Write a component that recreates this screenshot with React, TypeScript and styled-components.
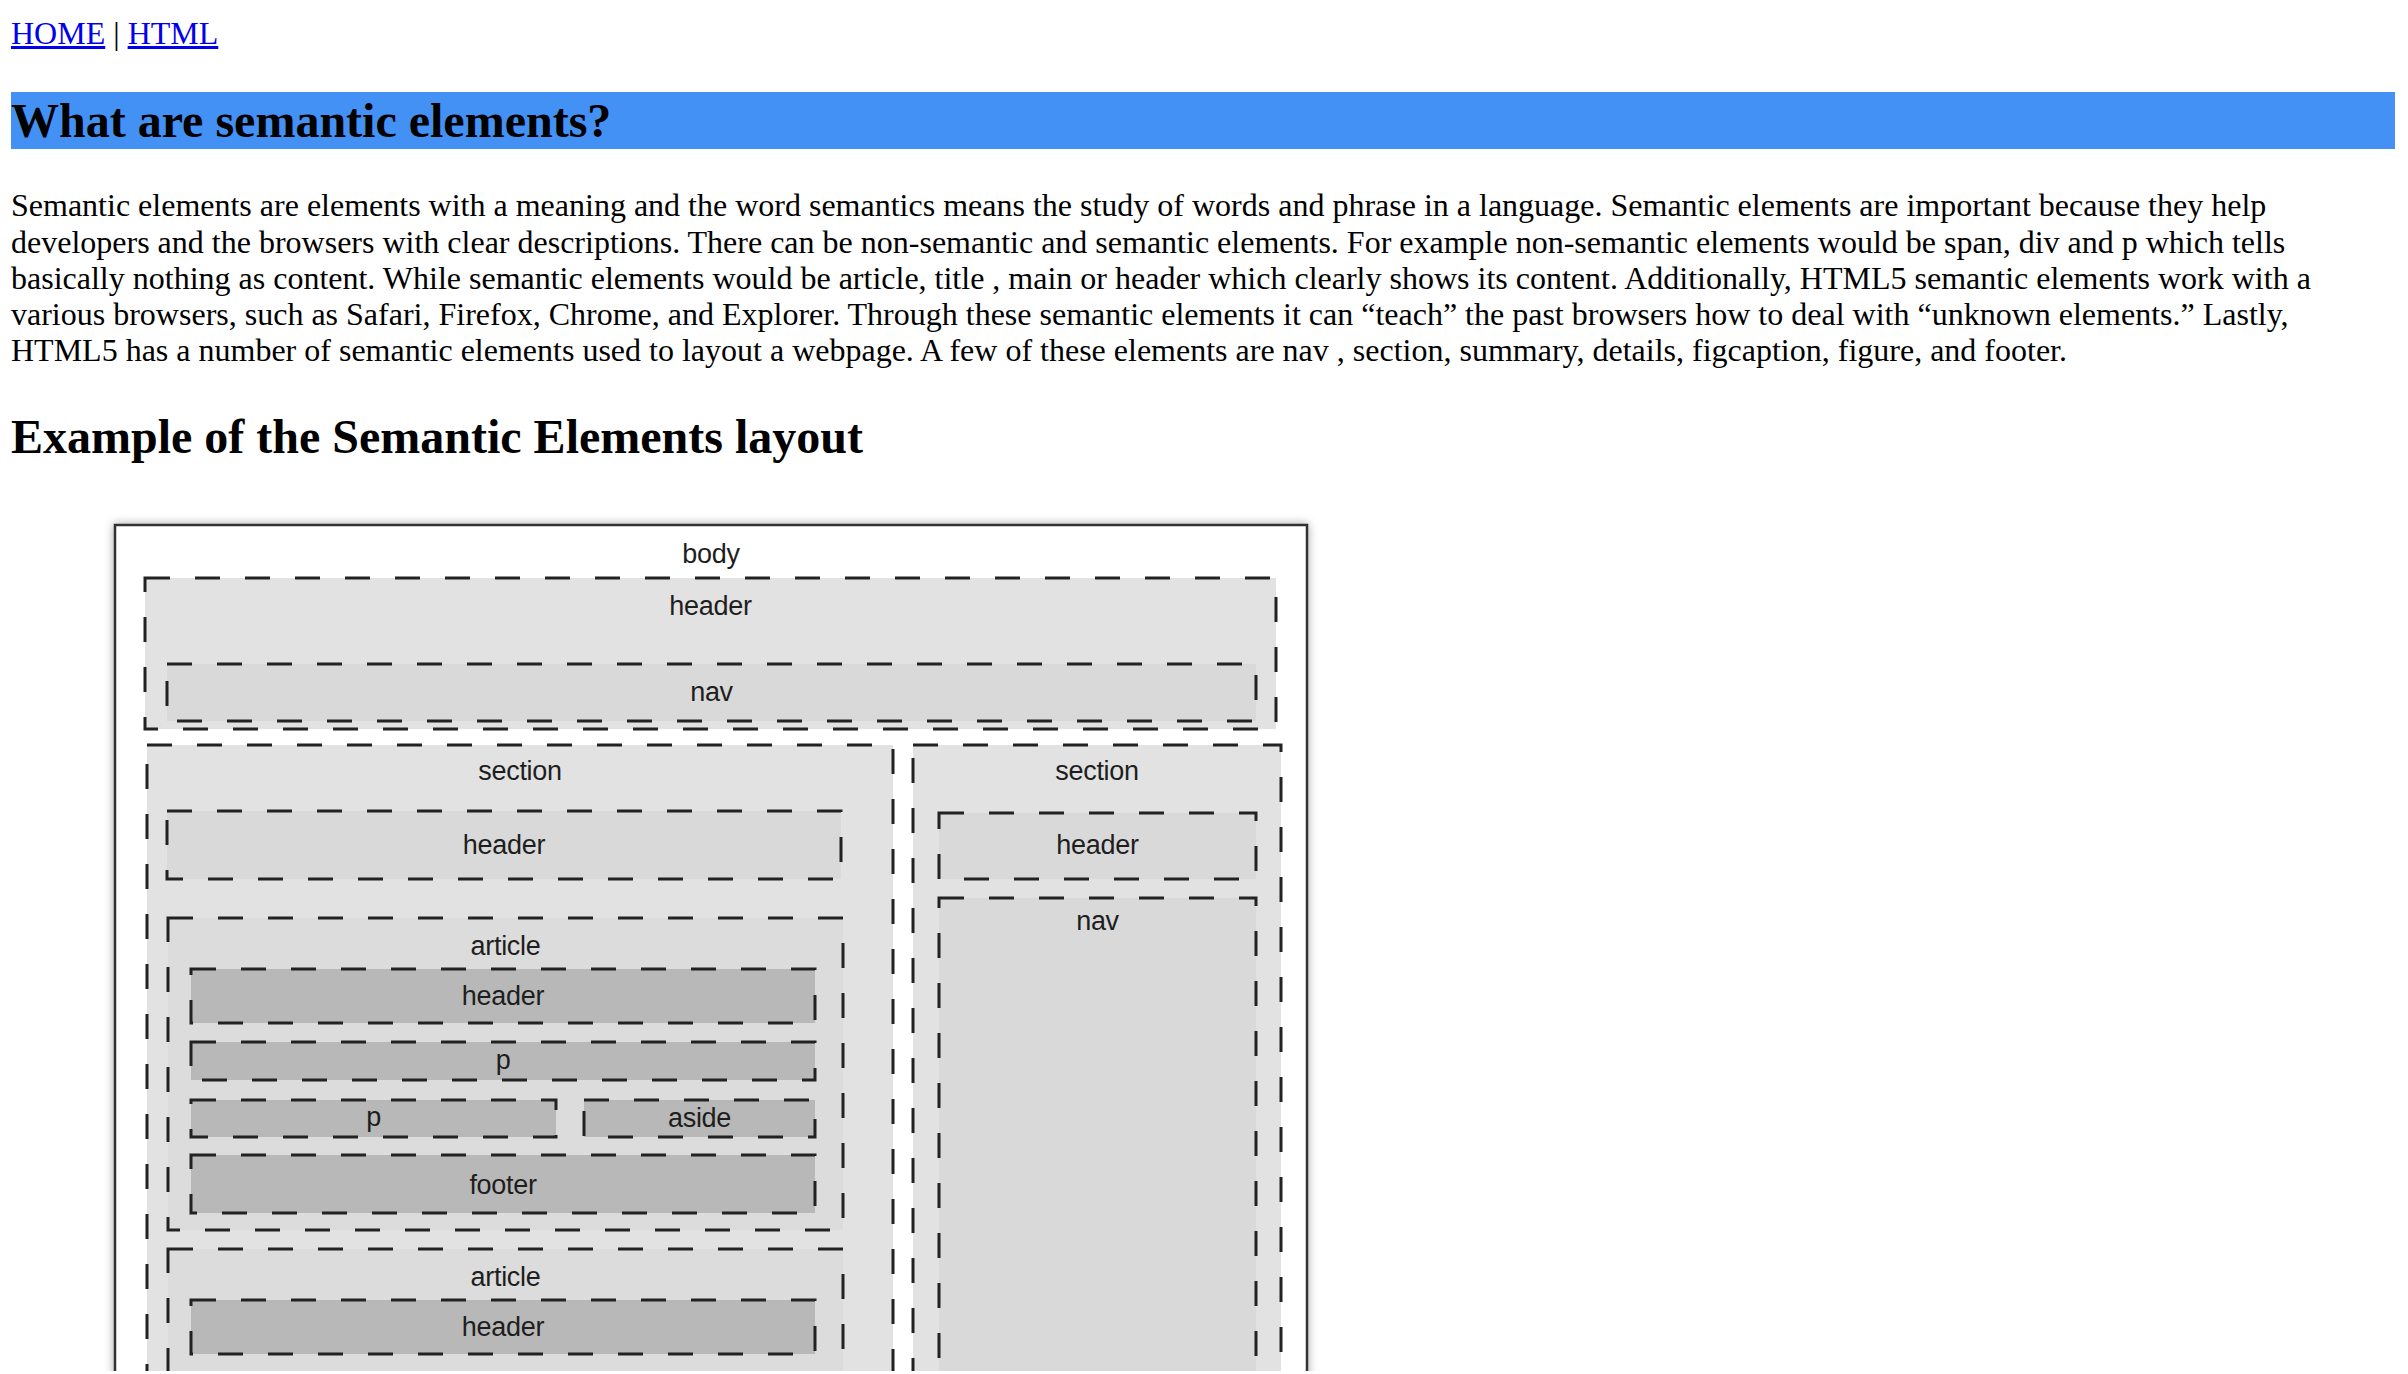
import React from 'react';
import styled, { createGlobalStyle } from 'styled-components';

const GlobalStyle = createGlobalStyle`
  html, body {
    margin: 0;
    padding: 0;
    background: #ffffff;
  }
  body {
    font-family: "Liberation Serif", "Times New Roman", serif;
    color: #000000;
  }
`;

const Page = styled.div`
  padding: 15px 13px 0 11px;
  font-size: 32px;
  line-height: 36.3px;
`;

const TopNav = styled.nav`
  margin: 0;
`;

const NavLink = styled.a`
  color: #0000ee;
  text-decoration: underline;
`;

const Title = styled.h1`
  margin: 41px 0 0;
  background: #4391f5;
  font-size: 48px;
  line-height: 57px;
  font-weight: bold;
`;

const Intro = styled.p`
  margin: 38px 0 0;
`;

const SubTitle = styled.h2`
  margin: 40px 0 0;
  font-size: 48px;
  line-height: 55px;
  font-weight: bold;
`;

const Diagram = styled.svg`
  display: block;
  margin: 47px 0 0 89px;
  width: 1220px;
  height: 860px;
`;

const Frame = styled.rect`
  fill: #ffffff;
  stroke: #333333;
  stroke-width: 2.5;
`;

const Region = styled.rect<{ $tone: string }>`
  fill: ${p => p.$tone};
  stroke: #222222;
  stroke-width: 3;
  stroke-dasharray: 25 25;
`;

const Label = styled.text`
  font-family: "Liberation Sans", Arial, sans-serif;
  font-size: 27px;
  letter-spacing: -0.3px;
  fill: #1e1e1e;
  text-anchor: middle;
`;

type Box = {
  x1: number;
  y1: number;
  x2: number;
  y2: number;
  tone: string;
  label?: string;
  base?: number;
};

const LIGHT = '#e2e2e2';
const MID = '#d9d9d9';
const ART = '#dcdcdc';
const DARK = '#b8b8b8';

// the picture is cut at the bottom of the window, so the lower rows of the
// second article carry no label
const article = (top: number, full: boolean): Box[] => [
  { x1: 168, y1: top, x2: 843, y2: top + 312, tone: ART, label: 'article', base: top + 37 },
  { x1: 191, y1: top + 51, x2: 815, y2: top + 105, tone: DARK, label: 'header', base: top + 87 },
  { x1: 191, y1: top + 124, x2: 815, y2: top + 162, tone: DARK, ...(full ? { label: 'p', base: top + 151 } : {}) },
  { x1: 191, y1: top + 182, x2: 556, y2: top + 219, tone: DARK, ...(full ? { label: 'p', base: top + 208 } : {}) },
  { x1: 584, y1: top + 182, x2: 815, y2: top + 219, tone: DARK, ...(full ? { label: 'aside', base: top + 209 } : {}) },
  { x1: 191, y1: top + 237, x2: 815, y2: top + 295, tone: DARK, ...(full ? { label: 'footer', base: top + 276 } : {}) },
];

const boxes: Box[] = [
  { x1: 145, y1: 577, x2: 1276, y2: 728, tone: LIGHT, label: 'header', base: 614 },
  { x1: 167, y1: 663, x2: 1256, y2: 720, tone: MID, label: 'nav', base: 700 },
  { x1: 147, y1: 744, x2: 893, y2: 1420, tone: LIGHT, label: 'section', base: 779 },
  { x1: 913, y1: 744, x2: 1281, y2: 1420, tone: LIGHT, label: 'section', base: 779 },
  { x1: 167, y1: 810, x2: 841, y2: 878, tone: MID, label: 'header', base: 853 },
  ...article(917, true),
  ...article(1248, false),
  { x1: 939, y1: 812, x2: 1256, y2: 878, tone: MID, label: 'header', base: 853 },
  { x1: 939, y1: 897, x2: 1256, y2: 1410, tone: MID, label: 'nav', base: 929 },
];

const DiagramBox: React.FC<{ box: Box }> = ({ box }) => (
  <g>
    <Region
      $tone={box.tone}
      x={box.x1}
      y={box.y1}
      width={box.x2 - box.x1}
      height={box.y2 - box.y1}
    />
    {box.label && (
      <Label x={(box.x1 + box.x2) / 2} y={box.base}>
        {box.label}
      </Label>
    )}
  </g>
);

const LayoutDiagram: React.FC = () => (
  <Diagram viewBox="100 510 1220 860" xmlns="http://www.w3.org/2000/svg">
    <defs>
      <filter id="frameShadow" x="-5%" y="-5%" width="110%" height="110%">
        <feDropShadow dx="0" dy="0" stdDeviation="5" floodColor="#000000" floodOpacity="0.35" />
      </filter>
    </defs>
    <Frame x={115} y={524} width={1192} height={920} filter="url(#frameShadow)" />
    <Label x={711} y={562}>body</Label>
    {boxes.map((b, i) => (
      <DiagramBox key={i} box={b} />
    ))}
  </Diagram>
);

const App: React.FC = () => {
  return (
    <Page>
      <GlobalStyle />
      <TopNav>
        <NavLink href="#home">HOME</NavLink> | <NavLink href="#html">HTML</NavLink>
      </TopNav>
      <Title>What are semantic elements?</Title>
      <Intro>
        Semantic elements are elements with a meaning and the word semantics means the study of words and phrase in a
        language. Semantic elements are important because they help developers and the browsers with clear descriptions.
        There can be non-semantic and semantic elements. For example non-semantic elements would be span, div and p which
        tells basically nothing as content. While semantic elements would be article, title , main or header which clearly
        shows its content. Additionally, HTML5 semantic elements work with a various browsers, such as Safari, Firefox,
        Chrome, and Explorer. Through these semantic elements it can “teach” the past browsers how to deal with “unknown
        elements.” Lastly, HTML5 has a number of semantic elements used to layout a webpage. A few of these elements are
        nav , section, summary, details, figcaption, figure, and footer.
      </Intro>
      <SubTitle>Example of the Semantic Elements layout</SubTitle>
      <LayoutDiagram />
    </Page>
  );
};

export default App;
